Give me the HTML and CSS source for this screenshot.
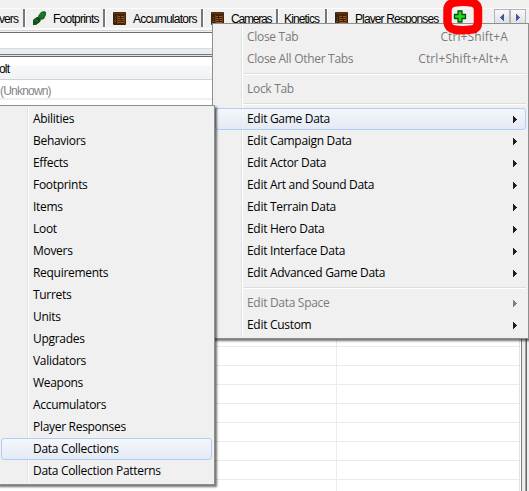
FILE: index.html
```html
<!DOCTYPE html>
<html lang="en">
<head>
<meta charset="utf-8">
<title>Data Editor</title>
<link rel="stylesheet" href="styles.css">
</head>
<body>
<svg class="defs" width="0" height="0">
  <symbol id="crate" viewBox="0 0 13 13">
    <rect width="13" height="13" rx="1" fill="#41200a"/>
    <path d="M1 .5h11v1.500H1z" fill="#6b360f"/>
    <path d="M5 4.500h2M8 4.500h4M5 6.500h2M8 6.500h3M5 8.500h3M9 8.500h3M5 10.500h6" stroke="#9a5820"/>
    <path d="M4.500 3v9M11.500 3v9" stroke="#70390f"/>
    <path d="M2 5h1v1H2zM1 9h2v1H1zM2 7h1v1H2z" fill="#3d6a24"/>
  </symbol>
  <symbol id="arrow" viewBox="0 0 4 7"><path d="M0 0h1v1h1v1h1v1h1v1H3v1H2v1H1v1H0z"/></symbol>
</svg>
<div class="window">
  <div class="tabs">
    <div class="tab t1"><span>vers</span></div>
    <div class="tab t2">
      <svg class="icon" width="14" height="14" viewBox="0 0 14 14"><path d="M5 5L8 1l3-1 2 1v3l-2 4-3 1-3-2z" fill="#176b20"/><path d="M1 8l3-2 4 3-1 2-4 3H0V9z" fill="#12521a"/><path d="M7 4l3-2M9 6l2-3M2 9l2 1" stroke="#2b8a30"/><path d="M4 6l3 3" stroke="#072d0b"/></svg>
      <span>Footprints</span></div>
    <div class="tab t3"><svg class="icon" width="13" height="13"><use href="#crate"/></svg><span>Accumulators</span></div>
    <div class="tab t4"><svg class="icon" width="13" height="13"><use href="#crate"/></svg><span>Cameras</span></div>
    <div class="tab t5"><span>Kinetics</span></div>
    <div class="tab t6"><svg class="icon" width="13" height="13"><use href="#crate"/></svg><span>Player Responses</span></div>
    <div class="scroll">
      <b><svg width="4" height="7" class="flip"><use href="#arrow"/></svg></b><b><svg width="4" height="7"><use href="#arrow"/></svg></b>
    </div>
  </div>
  <div class="strip"></div>
  <div class="gap"></div>
  <div class="head"><span>olt</span></div>
  <div class="unknown"><span>(Unknown)</span></div>
  <div class="grid">
    <div class="cells"></div>
    <div class="edge"></div>
  </div>
</div>

<div class="menu main">
  <div class="item off"><span>Close Tab</span><kbd>Ctrl+Shift+A</kbd></div>
  <div class="item off"><span>Close All Other Tabs</span><kbd>Ctrl+Shift+Alt+A</kbd></div>
  <div class="sep"></div>
  <div class="item off"><span>Lock Tab</span></div>
  <div class="sep"></div>
  <div class="item hot"><span>Edit Game Data</span><svg><use href="#arrow"/></svg></div>
  <div class="item"><span>Edit Campaign Data</span><svg><use href="#arrow"/></svg></div>
  <div class="item"><span>Edit Actor Data</span><svg><use href="#arrow"/></svg></div>
  <div class="item"><span>Edit Art and Sound Data</span><svg><use href="#arrow"/></svg></div>
  <div class="item"><span>Edit Terrain Data</span><svg><use href="#arrow"/></svg></div>
  <div class="item"><span>Edit Hero Data</span><svg><use href="#arrow"/></svg></div>
  <div class="item"><span>Edit Interface Data</span><svg><use href="#arrow"/></svg></div>
  <div class="item"><span>Edit Advanced Game Data</span><svg><use href="#arrow"/></svg></div>
  <div class="sep"></div>
  <div class="item off"><span>Edit Data Space</span><svg><use href="#arrow"/></svg></div>
  <div class="item"><span>Edit Custom</span><svg><use href="#arrow"/></svg></div>
</div>

<div class="menu sub">
  <div class="item"><span>Abilities</span></div>
  <div class="item"><span>Behaviors</span></div>
  <div class="item"><span>Effects</span></div>
  <div class="item"><span>Footprints</span></div>
  <div class="item"><span>Items</span></div>
  <div class="item"><span>Loot</span></div>
  <div class="item"><span>Movers</span></div>
  <div class="item"><span>Requirements</span></div>
  <div class="item"><span>Turrets</span></div>
  <div class="item"><span>Units</span></div>
  <div class="item"><span>Upgrades</span></div>
  <div class="item"><span>Validators</span></div>
  <div class="item"><span>Weapons</span></div>
  <div class="item"><span>Accumulators</span></div>
  <div class="item"><span>Player Responses</span></div>
  <div class="item hot"><span>Data Collections</span></div>
  <div class="item"><span>Data Collection Patterns</span></div>
</div>

<svg class="marker" width="46" height="40" viewBox="0 0 46 40">
  <path d="M18 11h4v3.500h3.500v4H22V22h-4v-3.500h-3.500v-4H18z" fill="#1be01b" stroke="#0a4d0a" stroke-width="1.300" stroke-linejoin="round"/>
  <path d="M14 2.500Q24 1 32 2.500Q38 4 38 10V22Q38 29 32 29.500Q22 31 14 29.500Q8 28 7.500 22V10Q7.500 4 14 2.500Z" fill="none" stroke="#f00" stroke-width="8.500"/>
</svg>
</body>
</html>
```

FILE: styles.css
```css
* { box-sizing: border-box; }
body {
  margin: 0;
  position: relative;
  width: 529px;
  height: 491px;
  overflow: hidden;
  background: #f0f0f0;
  font: 12px/22px "Open Sans", "Noto Sans", sans-serif;
  color: #000;
}
svg { display: block; }
.defs { position: absolute; }
.window {
  display: flex;
  flex-direction: column;
  height: 491px;
  font-family: "Liberation Sans", Arial, sans-serif;
}

.tabs {
  display: flex;
  height: 32px;
  padding-top: 9px;
  background: linear-gradient(#f0f0f0 0 8px, #fbfbfb 8px 9px, #f0f0f0 9px 28px, #fafafa 28px 30px, #d4d4d4 30px 31px, #f0f0f0 31px);
  letter-spacing: -0.75px;
}
.tab {
  display: flex;
  flex: none;
  height: 18px;
  line-height: 20px;
  border-right: 2px solid #77777b;
  white-space: nowrap;
}
.tab + .tab { border-left: 1px solid #fff; }
.icon { flex: none; margin-top: 3px; }
.t1 { width: 25px; text-indent: -1px; letter-spacing: -0.9px; }
.t2 { width: 80px; padding-left: 7px; letter-spacing: -0.75px; }
.t2 span { margin-left: 6px; }
.t2 .icon { margin-top: 2px; }
.t3 { width: 98px; padding-left: 7px; }
.t4 { width: 75px; padding-left: 7px; letter-spacing: -1.2px; }
.t3 span, .t4 span, .t6 span { margin-left: 7px; }
.t5 { width: 49px; padding-left: 5px; letter-spacing: -0.85px; }
.t6 { width: 120px; padding-left: 7px; border-right: 0; letter-spacing: -0.88px; }
.scroll { display: flex; margin-left: 47px; }
.scroll b {
  display: flex;
  align-items: center;
  justify-content: center;
  width: 16px;
  height: 16px;
  border: 1px solid #b4b4b8;
  background: linear-gradient(#f8f8f8, #dedee4);
  fill: #405a9c;
}
.flip { transform: scaleX(-1); }

.strip {
  height: 17px;
  border-top: 1px solid #6e6e72;
  border-bottom: 1px solid #dcdcdc;
  background: #fff;
}
.gap {
  height: 8px;
  background: linear-gradient(#e9edf2 0 5px, #75777c 5px 6px, #e4e4e4 6px 7px, #67676b 7px);
}
.head {
  height: 23px;
  line-height: 25px;
  border-bottom: 1px solid #d2d3d6;
  background: linear-gradient(#fff 0 8px, #f7f8fa 9px, #f1f2f4);
  text-indent: -1px;
  letter-spacing: -0.8px;
}
.unknown {
  height: 26px;
  line-height: 23px;
  background: linear-gradient(#fff 0 18px, #f0f0f0 18px 20px, #fff 20px 25px, #8c8c8c 25px);
  color: #84848a;
  letter-spacing: -0.8px;
}
.grid { display: flex; flex: 1; }
.cells {
  width: 520px;
  border-right: 1px solid #e2e2e2;
  background:
    linear-gradient(90deg, transparent 336px, #ebebeb 336px 337px, transparent 337px),
    repeating-linear-gradient(#fff 0 12px, #ebebeb 12px 13px, #fff 13px 19px);
}
.edge {
  width: 9px;
  background: linear-gradient(90deg, #fff 0 1px, #7c7c82 1px 2px, #ececec 2px 5px, #a2a2a2 5px 6px, #68686c 6px 7px, #eee 7px);
}

.menu {
  position: absolute;
  background: #f0f0f0;
  border: 1px solid #8f8f8f;
  padding: 2px;
  box-shadow: 2px 2px 2px rgba(0, 0, 0, .55);
}
.main { left: 212px; top: 23px; width: 317px; height: 316px; }
.sub { left: -3px; top: 105px; width: 218px; height: 380px; }
.menu::before {
  content: "";
  position: absolute;
  top: 2px;
  bottom: 2px;
  left: 29px;
  width: 2px;
  background: linear-gradient(90deg, #e2e3e3 50%, #fff 50%);
}
.main::before { left: 28px; }
.item {
  position: relative;
  display: flex;
  height: 22px;
  padding-left: 31px;
  border: 1px solid transparent;
  line-height: 20px;
  white-space: nowrap;
  letter-spacing: -0.3px;
}
.sub .item { width: 211px; margin-left: 1px; }
.main .item { width: 311px; }
.item svg {
  width: 4px;
  height: 7px;
  margin: 7px 8px 0 auto;
  fill: #1e1e22;
}
.hot {
  border-color: #aecff7;
  border-radius: 3px;
  background: linear-gradient(rgba(246, 248, 251, .8), rgba(224, 232, 246, .75));
}
.off { color: #7a7a7a; }
.off svg { fill: #808080; }
kbd { font: inherit; margin-left: auto; padding-right: 17px; letter-spacing: 0.1px; }
.sep {
  height: 8px;
  margin-left: 28px;
  background: linear-gradient(transparent 3px, #dedede 3px 4px, #fff 4px 5px, transparent 5px);
}
.marker { position: absolute; left: 440px; top: 0; }
```
